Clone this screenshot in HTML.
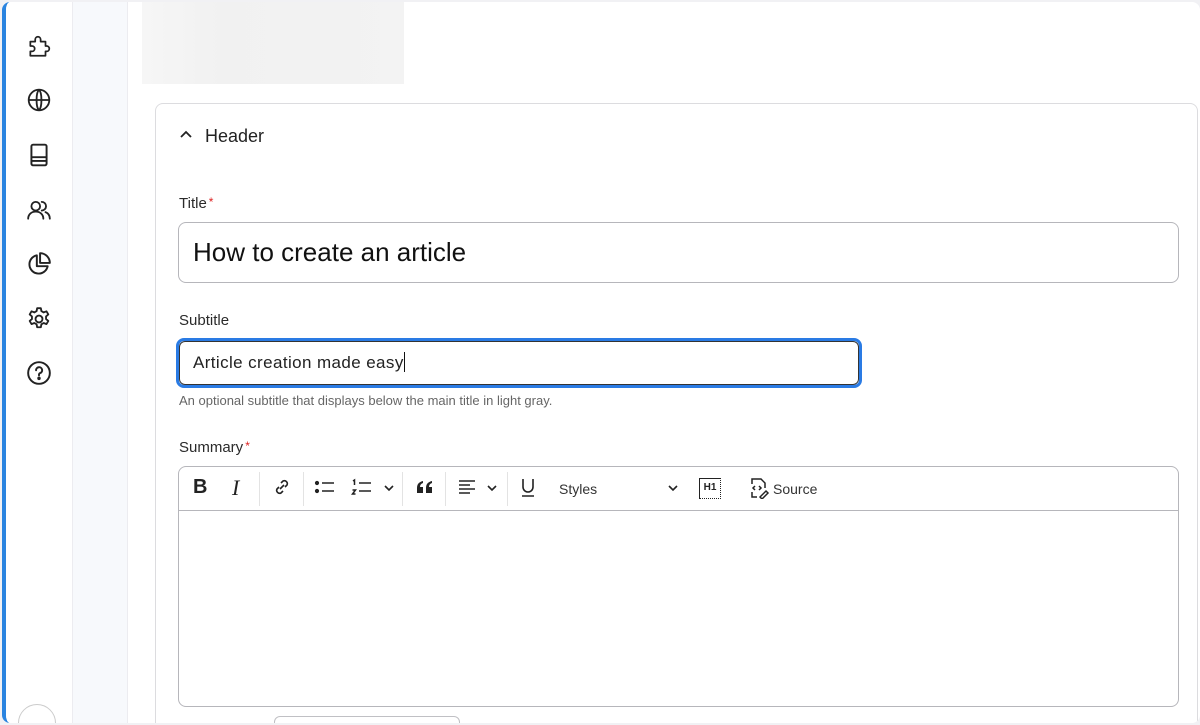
<!DOCTYPE html>
<html><head><style>
*{box-sizing:border-box;margin:0;padding:0}
body{width:1200px;height:725px;overflow:hidden;background:#f1f1f4;font-family:"Liberation Sans",sans-serif;color:#222;position:relative}
.frame{position:absolute;left:2px;top:2px;width:1198px;height:721px;background:#fff;border-radius:8px;overflow:hidden;border-left:4px solid #2a84e0}
.side{position:absolute;left:0;top:0;width:67px;height:100%;background:#fff;border-right:1px solid #ececf0}
.strip{position:absolute;left:67px;top:0;width:55px;height:100%;background:#f7f9fc;border-right:1px solid #ececf0}
.ico{position:absolute;left:20px;width:26px;height:26px}
.ph{position:absolute;left:136px;top:0;width:262px;height:82px;background:linear-gradient(90deg,#f6f6f6,#f1f1f1 30%,#f3f3f3)}
.card{position:absolute;left:149px;top:101px;width:1043px;height:640px;border:1px solid #dcdcdf;border-radius:8px}
.abs{position:absolute}
.lbl{font-size:15px;color:#2a2a2a}
.req{color:#d22;font-size:12px;vertical-align:top;margin-left:2px}
.sep{position:absolute;top:470px;width:1px;height:34px;background:#e3e3e3}
</style></head><body>
<div class="frame">
<div class="side">
<svg class="ico" style="top:31px" viewBox="0 0 24 24" fill="none" stroke="#222" stroke-width="1.6" stroke-linejoin="round"><path d="M4 8h4.5V6a2.5 2.5 0 0 1 5 0v2H18v4h1a2.5 2.5 0 0 1 0 5h-1v4H4v-4h1.5a2.5 2.5 0 0 0 0-5H4z"/></svg>
<svg class="ico" style="top:85px" viewBox="0 0 24 24" fill="none" stroke="#222" stroke-width="1.7"><circle cx="12" cy="12" r="9.5"/><path d="M2.5 12h19M12 2.5c3 3 3 16 0 19M12 2.5c-3 3-3 16 0 19"/></svg>
<svg class="ico" style="top:140px" viewBox="0 0 24 24" fill="none" stroke="#222" stroke-width="1.8"><rect x="5" y="2.5" width="14" height="19" rx="1.5"/><path d="M5 14h14M5 17.5h14"/></svg>
<svg class="ico" style="top:195px" viewBox="0 0 24 24" fill="none" stroke="#222" stroke-width="1.7" stroke-linecap="round"><circle cx="9" cy="8.5" r="4"/><path d="M2 20c0-4 3-6.5 7-6.5s7 2.5 7 6.5M14.5 4.5a4 4 0 0 1 0 8M18 14c2 .8 4 2.5 4 6"/></svg>
<svg class="ico" style="top:249px" viewBox="0 0 24 24" fill="none" stroke="#222" stroke-width="1.8" stroke-linejoin="round"><path d="M10 4a8.5 8.5 0 1 0 10 10h-10z"/><path d="M13 2a9 9 0 0 1 9 9h-9z"/></svg>
<svg class="ico" style="top:304px" viewBox="0 0 24 24" fill="none" stroke="#222" stroke-width="1.7" stroke-linejoin="round"><circle cx="12" cy="12" r="3.2"/><path d="M10.3 2h3.4l.5 2.7 2.1 1.2 2.6-1 1.7 2.9-2.1 1.8v2.4l2.1 1.8-1.7 2.9-2.6-1-2.1 1.2-.5 2.7h-3.4l-.5-2.7-2.1-1.2-2.6 1-1.7-2.9 2.1-1.8v-2.4l-2.1-1.8 1.7-2.9 2.6 1 2.1-1.2z"/></svg>
<svg class="ico" style="top:358px" viewBox="0 0 24 24" fill="none" stroke="#222" stroke-width="1.8" stroke-linecap="round"><circle cx="12" cy="12" r="10"/><path d="M9.3 9.5a2.8 2.8 0 1 1 3.7 2.6c-.7.3-1 .8-1 1.5v.6"/><circle cx="12" cy="17" r=".7" fill="#222"/></svg>
<div class="abs" style="left:12px;top:702px;width:38px;height:38px;border:1px solid #ccc;border-radius:50%"></div>
</div>
<div class="strip"></div>
<div class="ph"></div>
<div class="card"></div>
<svg class="abs" style="left:173px;top:127px" width="14" height="10" viewBox="0 0 14 10" fill="none" stroke="#222" stroke-width="1.8"><path d="M2 8l5-5 5 5"/></svg>
<div class="abs" style="left:199px;top:124px;font-size:18px;color:#222">Header</div>
<div class="abs lbl" style="left:173px;top:193px">Title<span class="req">*</span></div>
<div class="abs" style="left:172px;top:220px;width:1001px;height:61px;border:1px solid #b6b6bb;border-radius:8px"></div>
<div class="abs" style="left:187px;top:235px;font-size:26px;color:#111">How to create an article</div>
<div class="abs lbl" style="left:173px;top:310px">Subtitle</div>
<div class="abs" style="left:170px;top:336px;width:686px;height:50px;border:3px solid #2a7be4;border-radius:8px"></div>
<div class="abs" style="left:173px;top:339px;width:680px;height:44px;border:1px solid #333;border-radius:6px"></div>
<div class="abs" style="left:187px;top:350px;font-size:17px;color:#222;letter-spacing:0.4px">Article creation made easy<span style="display:inline-block;width:1px;height:20px;background:#111;vertical-align:-4px"></span></div>
<div class="abs" style="left:173px;top:391px;font-size:13px;color:#666">An optional subtitle that displays below the main title in light gray.</div>
<div class="abs lbl" style="left:173px;top:437px">Summary<span class="req">*</span></div>
<div class="abs" style="left:172px;top:464px;width:1001px;height:241px;border:1px solid #b6b6bb;border-radius:8px"></div>
<div class="abs" style="left:173px;top:508px;width:999px;height:1px;background:#b6b6bb"></div>

<b class="abs" style="left:187px;top:474px;font-size:20px">B</b>
<i class="abs" style="left:226px;top:473px;font-family:'Liberation Serif',serif;font-size:22px">I</i>
<div class="sep" style="left:253px"></div>
<svg class="abs" style="left:266px;top:475px" width="20" height="20" viewBox="0 0 20 20" fill="none" stroke="#222" stroke-width="1.6"><path d="M8 12l4-4M9 6l2-2a3 3 0 0 1 4 4l-2 2M11 14l-2 2a3 3 0 0 1-4-4l2-2"/></svg>
<div class="sep" style="left:297px"></div>
<svg class="abs" style="left:308px;top:475px" width="22" height="20" viewBox="0 0 22 20" fill="none" stroke="#222" stroke-width="1.6"><circle cx="3" cy="6" r="1.3" fill="#222"/><circle cx="3" cy="14" r="1.3" fill="#222"/><path d="M8 6h12M8 14h12"/></svg>
<svg class="abs" style="left:345px;top:475px" width="22" height="20" viewBox="0 0 22 20" fill="none" stroke="#222" stroke-width="1.5"><path d="M2 4l1.5-1v5M8 6h12M8 14h12M1.5 13h3l-3 4h3"/></svg>
<svg class="abs" style="left:377px;top:481px" width="12" height="10" viewBox="0 0 12 10" fill="none" stroke="#222" stroke-width="1.6"><path d="M2 3l4 4 4-4"/></svg>
<div class="sep" style="left:396px"></div>
<svg class="abs" style="left:410px;top:478px" width="18" height="14" viewBox="0 0 18 14" fill="#222"><path d="M1 13V8c0-4 2-6 6-7v2c-2 .6-3 2-3 4h3v6zM10 13V8c0-4 2-6 6-7v2c-2 .6-3 2-3 4h3v6z"/></svg>
<div class="sep" style="left:439px"></div>
<svg class="abs" style="left:451px;top:475px" width="20" height="20" viewBox="0 0 20 20" fill="none" stroke="#222" stroke-width="1.6"><path d="M2 4h16M2 8h11M2 12h16M2 16h11"/></svg>
<svg class="abs" style="left:480px;top:481px" width="12" height="10" viewBox="0 0 12 10" fill="none" stroke="#222" stroke-width="1.6"><path d="M2 3l4 4 4-4"/></svg>
<div class="sep" style="left:501px"></div>
<svg class="abs" style="left:514px;top:475px" width="16" height="22" viewBox="0 0 16 22" fill="none" stroke="#222" stroke-width="1.6"><path d="M3 2v8a5 5 0 0 0 10 0V2M2 19h12"/></svg>
<div class="abs" style="left:553px;top:479px;font-size:14px;color:#333">Styles</div>
<svg class="abs" style="left:661px;top:481px" width="12" height="10" viewBox="0 0 12 10" fill="none" stroke="#222" stroke-width="1.6"><path d="M2 3l4 4 4-4"/></svg>
<div class="abs" style="left:693px;top:476px;width:22px;height:21px;border-top:1.5px solid #222;border-left:1.5px solid #222;border-right:1.5px dotted #222;border-bottom:1.5px dotted #222;font-size:10px;font-weight:bold;text-align:center;line-height:18px">H1</div>
<svg class="abs" style="left:740px;top:475px" width="24" height="22" viewBox="0 0 24 22" fill="none" stroke="#222" stroke-width="1.5"><path d="M6 7V2h9l4 4v5M6 15v5h5M9 9l-2 2 2 2M13 9l2 2-2 2M14 20l6-6 2 2-6 6z"/></svg>
<div class="abs" style="left:767px;top:479px;font-size:14px;color:#333">Source</div>
<div class="abs" style="left:268px;top:714px;width:186px;height:20px;border:1px solid #c0c0c4;border-radius:6px"></div>
</div>
</body></html>
